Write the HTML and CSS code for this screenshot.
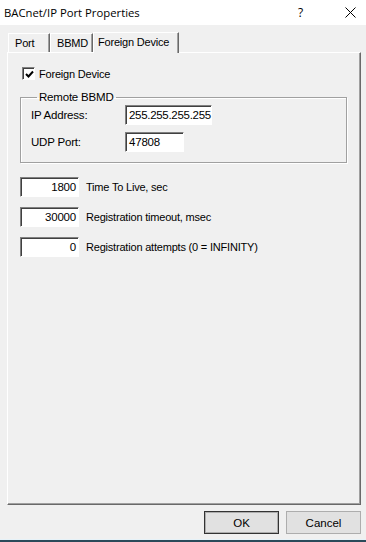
FILE: index.html
```html
<!DOCTYPE html>
<html lang="en">

<head>
    <meta charset="UTF-8">
    <title>BACnet/IP Port Properties</title>
    <link rel="stylesheet" href="styles.css">
</head>

<body>
    <!-- Title bar -->
    <div class="titlebar">
        <span class="title">BACnet/IP Port Properties</span>
        <span class="help">?</span>
        <span class="close">
            <svg width="11" height="11" viewBox="0 0 11 11">
                <path d="M0.5 0.5 L10.5 10.5 M10.5 0.5 L0.5 10.5" stroke="#000" stroke-width="1" fill="none"/>
            </svg>
        </span>
    </div>

    <!-- Tabs -->
    <div class="tabs">
        <div class="tab">Port</div>
        <div class="tab">BBMD</div>
        <div class="tab active">Foreign Device</div>
    </div>

    <!-- Tab panel -->
    <div class="panel">
        <label class="check-row">
            <span class="checkbox">
                <svg width="9" height="9" viewBox="0 0 9 9">
                    <path d="M1 4 L3.5 6.5 L8 1.5" stroke="#000" stroke-width="2" fill="none"/>
                </svg>
            </span>
            Foreign Device
        </label>

        <fieldset class="group">
            <legend>Remote BBMD</legend>
            <div class="field">
                <span class="field-label">IP Address:</span>
                <span class="edit ip">255.255.255.255</span>
            </div>
            <div class="field">
                <span class="field-label">UDP Port:</span>
                <span class="edit port">47808</span>
            </div>
        </fieldset>

        <div class="num-list">
            <div class="num-row">
                <span class="edit num">1800</span>
                <span>Time To Live, sec</span>
            </div>
            <div class="num-row">
                <span class="edit num">30000</span>
                <span>Registration timeout, msec</span>
            </div>
            <div class="num-row">
                <span class="edit num">0</span>
                <span>Registration attempts (0 = INFINITY)</span>
            </div>
        </div>
    </div>

    <!-- Buttons -->
    <div class="buttons">
        <button class="btn default">OK</button>
        <button class="btn">Cancel</button>
    </div>
    <div class="bottom-edge"></div>
</body>

</html>
```

FILE: styles.css
```css
/* Reset */
* {
    margin: 0;
    padding: 0;
    box-sizing: border-box;
}

body {
    width: 366px;
    height: 542px;
    background-color: #f0f0f0;
    font-family: 'Liberation Sans', Arial, sans-serif;
    font-size: 11px;
    letter-spacing: -0.2px;
    color: #000;
    overflow: hidden;
}

/* Title bar */
.titlebar {
    height: 25px;
    background-color: #fff;
    display: flex;
    align-items: center;
    padding-left: 4px;
    letter-spacing: 0;
}

.title {
    font-family: 'Open Sans', sans-serif;
    font-size: 11.3px;
    flex: 1;
}

.help {
    font-family: 'Open Sans', sans-serif;
    font-size: 12px;
    width: 20px;
    margin-right: 27px;
}

.close {
    width: 21px;
    display: flex;
}

/* Tabs */
.tabs {
    display: flex;
    align-items: flex-end;
    height: 27px;
    padding-left: 8px;
}

.tab {
    height: 19px;
    padding: 0 6px;
    line-height: 18px;
    font-size: 11px;
    border-top: 1px solid #fff;
    border-left: 1px solid #fff;
    border-right: 1px solid #696969;
    box-shadow: inset -1px 0 #a0a0a0;
}

.tab:first-child {
    width: 42px;
}

.tab:nth-child(2) {
    width: 43px;
}

.tab.active {
    width: 86px;
    height: 21px;
    padding: 0 0 0 4px;
    line-height: 19px;
    margin-bottom: -1px;
    background-color: #f0f0f0;
    position: relative;
    z-index: 1;
}

/* Panel */
.panel {
    margin: 0 5px 0 7px;
    height: 453px;
    border-top: 1px solid #fff;
    border-left: 1px solid #fff;
    border-right: 1px solid #696969;
    border-bottom: 1px solid #696969;
    box-shadow: inset -1px -1px #a0a0a0;
    padding: 14px 0 0 14px;
}

.check-row {
    display: flex;
    align-items: center;
    gap: 4px;
    height: 13px;
    font-size: 11px;
}

.checkbox {
    width: 13px;
    height: 13px;
    background-color: #fff;
    border-top: 1px solid #808080;
    border-left: 1px solid #808080;
    border-right: 1px solid #fff;
    border-bottom: 1px solid #fff;
    box-shadow: inset 1px 1px #404040;
    display: flex;
    align-items: center;
    justify-content: center;
    padding: 1px 0 0 1px;
}

/* Group box */
.group {
    margin: 11px 0 0 -2px;
    width: 327px;
    height: 72px;
    border: 1px solid #a0a0a0;
    box-shadow: 1px 1px #fff, inset 1px 1px #fff;
    padding: 2px 0 0 10px;
}

.group legend {
    font-size: 11.5px;
    padding: 0 2px;
    margin-left: 6px;
    line-height: 12px;
}

.field {
    display: flex;
    align-items: center;
    height: 20px;
    margin-bottom: 7px;
    font-size: 11.5px;
}

.field-label {
    width: 94px;
}

/* Edit boxes */
.edit {
    display: block;
    height: 20px;
    background-color: #fff;
    border-top: 1px solid #808080;
    border-left: 1px solid #808080;
    border-right: 1px solid #fff;
    border-bottom: 1px solid #fff;
    box-shadow: inset 1px 1px #404040;
    font-size: 11.5px;
    line-height: 18px;
    padding: 0 2px 0 3px;
}

.edit.ip {
    width: 87px;
    letter-spacing: -0.3px;
}

.edit.port {
    width: 59px;
}

.num-list {
    margin: 14px 0 0 -2px;
    display: flex;
    flex-direction: column;
    gap: 10px;
}

.num-row {
    display: flex;
    align-items: center;
    gap: 7px;
    font-size: 11px;
}

.edit.num {
    width: 59px;
    text-align: right;
}

/* Buttons */
.buttons {
    display: flex;
    justify-content: flex-end;
    gap: 7px;
    padding: 6px 5px 0 0;
    height: 34px;
}

.btn {
    width: 75px;
    height: 23px;
    font-family: 'Liberation Sans', Arial, sans-serif;
    font-size: 11.5px;
    background-color: #e1e1e1;
    border: 1px solid #adadad;
}

.btn.default {
    border: 1px solid #333;
    box-shadow: inset 0 0 0 1px #adadad;
}

.bottom-edge {
    height: 3px;
    border-top: 1px solid #e6f2f8;
    background-color: #2b4a5a;
}
```
